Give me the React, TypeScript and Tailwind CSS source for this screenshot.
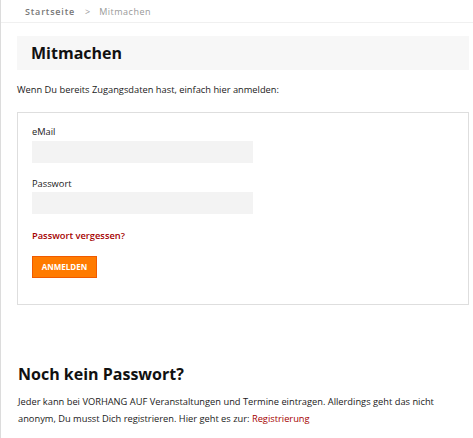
export default function App() {
  return (
    <div className="min-h-[438px] border-l border-[#dcdcdc] bg-white text-[#1a1a1a]" style={{ fontFamily: '"Open Sans", sans-serif' }}>
      <div className="flex h-[23px] items-center border-b border-[#f0f0f0] pt-[2px] pl-6 text-[9px]">
        <span className="font-semibold tracking-[0.8px] text-[#777]">Startseite</span>
        <span className="ml-[10px] text-[#999]">&gt;</span>
        <span className="ml-[9px] tracking-[0.5px] text-[#999]">Mitmachen</span>
      </div>
      <div className="pl-4 pr-1">
        <div className="mt-[13px] flex h-[34px] items-center bg-[#f7f7f7] px-[14px]">
          <h1 className="text-[16px] leading-[22px] font-bold text-[#111]">Mitmachen</h1>
        </div>
        <p className="mt-[13px] text-[9.3px] leading-[14px]">Wenn Du bereits Zugangsdaten hast, einfach hier anmelden:</p>
        <div className="mt-[15px] border border-[#dedede] px-[14px] pt-[12px] pb-[26px]">
          <label className="block text-[9.3px] leading-[14px]">eMail</label>
          <div className="mt-[2px] h-[22px] w-[221px] bg-[#f3f3f3]" />
          <label className="mt-[14px] block text-[9.3px] leading-[14px]">Passwort</label>
          <div className="mt-[1px] h-[22px] w-[221px] bg-[#f3f3f3]" />
          <div className="mt-[15px] text-[9.3px] leading-[14px] font-semibold text-[#a50000]">Passwort vergessen?</div>
          <button className="mt-[13px] flex h-[22px] w-[65px] items-center justify-center border border-[#f05a00] bg-[#ff7b00] text-[8px] font-bold text-white">ANMELDEN</button>
        </div>
        <h2 className="mt-[58px] pl-[1px] text-[16px] leading-[22px] font-bold text-[#111]">Noch kein Passwort?</h2>
        <p className="mt-[8px] pl-[1px] text-[9.3px] leading-[17px]">
          Jeder kann bei VORHANG AUF Veranstaltungen und Termine eintragen. Allerdings geht das nicht anonym, Du musst Dich registrieren. Hier geht es zur: <span className="text-[#a50000]">Registrierung</span>
        </p>
      </div>
    </div>
  );
}
